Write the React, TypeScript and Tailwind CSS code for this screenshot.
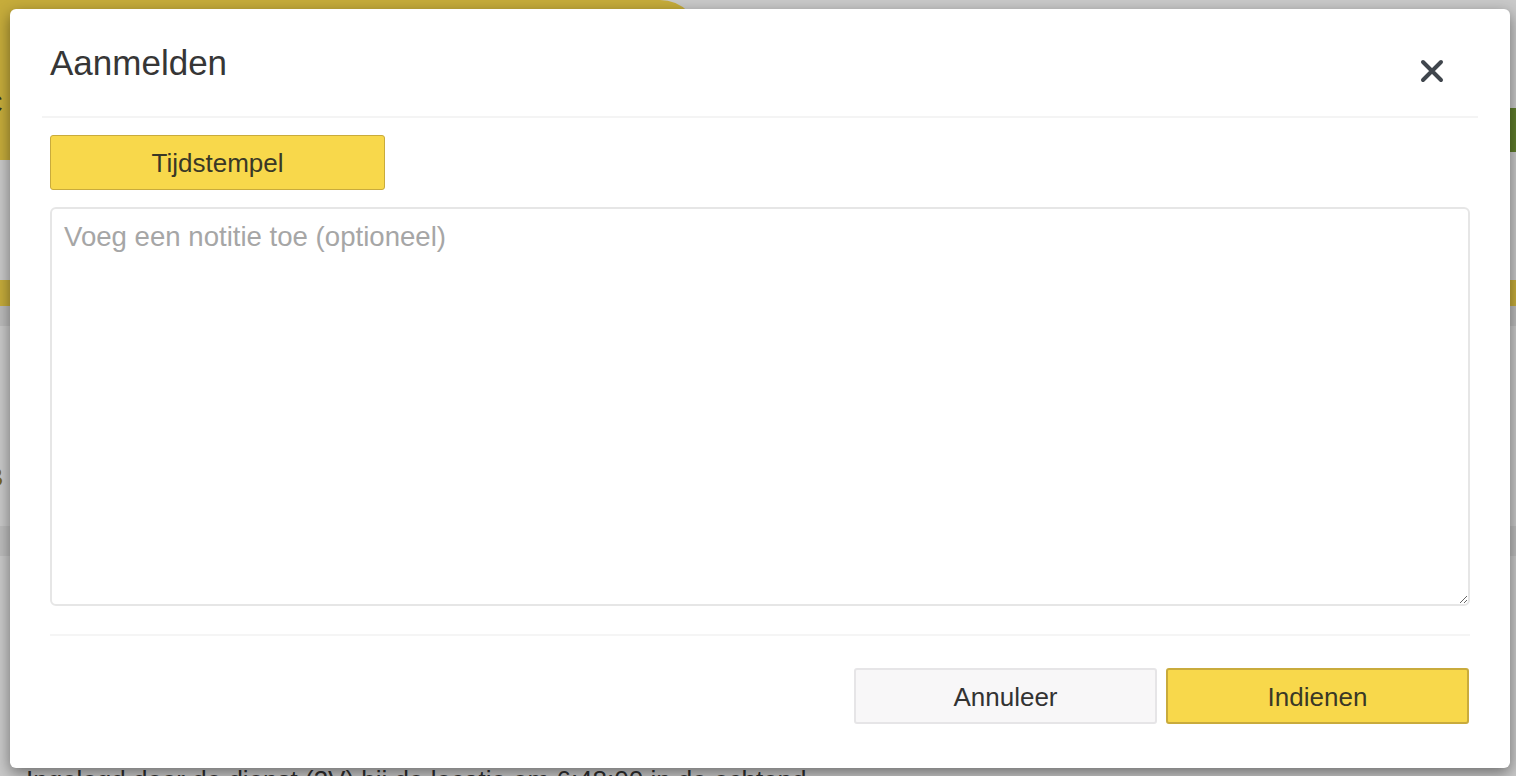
import { useState } from 'react';

function CloseIcon() {
  return (
    <svg width="24" height="24" viewBox="0 0 24 24" className="text-[#40464d]">
      <path
        d="M3 3L21 21M21 3L3 21"
        stroke="currentColor"
        strokeWidth="4"
        strokeLinecap="round"
      />
    </svg>
  );
}

function BackgroundPage() {
  return (
    <div className="flex h-full w-full flex-col bg-[#c9c9c9] text-[26px] text-[#2e2e2e] [&>*]:shrink-0">
      <div className="flex h-[160px]">
        <div className="flex w-[700px] flex-col justify-center gap-[22px] rounded-tr-[40px] bg-[#c6ac3b]">
          <span className="-ml-[14px] leading-none">b</span>
          <span className="-ml-[16px] leading-none">C</span>
        </div>
        <div className="flex flex-1 flex-col">
          <div className="h-[108px]" />
          <div className="ml-auto h-[44px] w-[60px] bg-[#5f7d2c]" />
        </div>
      </div>
      <div className="h-[120px] pt-[50px]">
        <span className="-ml-[14px] leading-none">c</span>
      </div>
      <div className="h-[26px] bg-[#c6ac3b]" />
      <div className="h-[20px] bg-[#bcbcbc]" />
      <div className="flex h-[200px] flex-col gap-[48px] pt-[64px]">
        <span className="-ml-[14px] leading-none">e</span>
        <span className="-ml-[14px] leading-none text-[#7a6420]">B</span>
      </div>
      <div className="h-[30px] bg-[#bdbdbd]" />
      <div className="flex flex-col gap-[32px] pt-[100px]">
        <span className="-ml-[14px] leading-none">e</span>
        <span className="-ml-[14px] leading-none">n</span>
      </div>
      <div className="mt-[27px] whitespace-nowrap pl-[26px] leading-none">
        Ingelogd door de dienst (3V) bij de locatie om 6:48:00 in de ochtend
      </div>
    </div>
  );
}

export default function App() {
  const [note, setNote] = useState('');

  return (
    <div
      className="relative h-[776px] w-[1516px] overflow-hidden"
      style={{ fontFamily: '"Liberation Sans", Arial, sans-serif' }}>
      <BackgroundPage />

      <div className="absolute left-[10px] top-[9px] flex h-[759px] w-[1500px] flex-col rounded-[6px] bg-white shadow-[0_5px_15px_rgba(0,0,0,0.45)]">
        <div className="flex h-[107px] items-start justify-between px-[40px] pt-[34px]">
          <h4 className="text-[35px] leading-[40px] text-[#363636]">Aanmelden</h4>
          <button type="button" className="mr-[26px] mt-[16px]" aria-label="Sluiten">
            <CloseIcon />
          </button>
        </div>
        <div className="mx-[32px] h-[2px] bg-[#f4f4f4]" />

        <div className="flex flex-col gap-[17px] px-[40px] pt-[17px]">
          <button
            type="button"
            className="h-[55px] w-[335px] rounded-[3px] border border-[#c9ab3c] bg-[#f8d84b] pt-[2px] text-[26px] text-[#3a3826]">
            Tijdstempel
          </button>
          <textarea
            value={note}
            onChange={(e) => setNote(e.target.value)}
            placeholder="Voeg een notitie toe (optioneel)"
            className="h-[399px] w-full rounded-[6px] border-2 border-[#e6e6e6] px-[12px] py-[8px] text-[27.6px] leading-[40px] text-[#333] outline-none placeholder:text-[#a6a6a6]"
          />
        </div>

        <div className="mx-[40px] mt-[28px] h-[2px] bg-[#f5f5f5]" />

        <div className="flex justify-end gap-[9px] px-[41px] pt-[32px]">
          <button
            type="button"
            className="h-[56px] w-[303px] rounded-[3px] border-2 border-[#e6e5e7] bg-[#f8f7f8] pt-[3px] text-[26px] text-[#333]">
            Annuleer
          </button>
          <button
            type="button"
            className="h-[56px] w-[303px] rounded-[3px] border-2 border-[#c9ab3c] bg-[#f8d84b] pt-[3px] text-[26px] text-[#3a3826]">
            Indienen
          </button>
        </div>
      </div>
    </div>
  );
}
